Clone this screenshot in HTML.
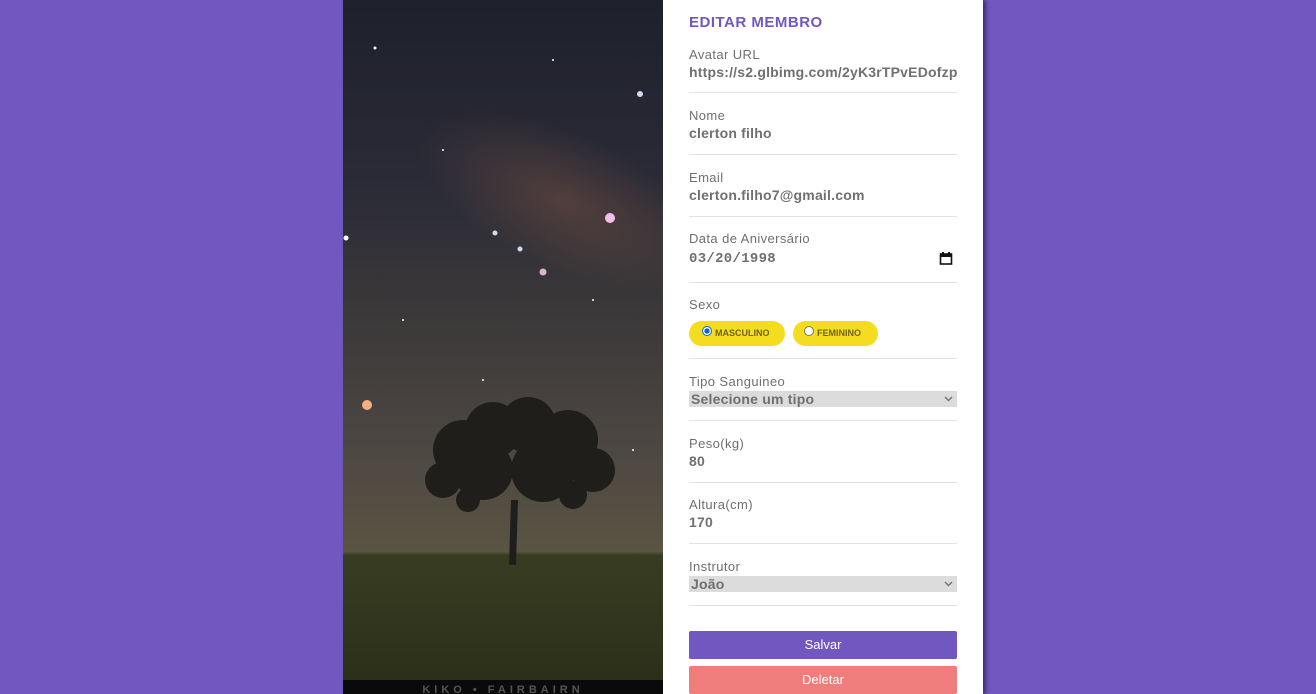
<!DOCTYPE html>
<html><head><meta charset="utf-8"><style>
body{margin:0;width:1316px;height:694px;background:#7157c0;font-family:"Liberation Sans",sans-serif;overflow:hidden;position:relative}
.card{position:absolute;left:343px;top:0;width:640px;height:694px;background:#fff;box-shadow:3px 0 4px rgba(0,0,0,.45)}
.img{position:absolute;left:343px;top:0;width:320px;height:694px;overflow:hidden;
background:linear-gradient(180deg,#1e202c 0%,#292a36 25%,#3b3839 45%,#4a4541 62%,#5a5443 79.5%,#373c22 80%,#2c3019 98%,#0a0a0a 98%)}
.t{position:absolute;left:689px;color:#6e6e6e}
.lab{font-size:13px;letter-spacing:.4px;color:#6f6f6f}
.val{font-size:14px;font-weight:bold;color:#707070;letter-spacing:.2px}
.hr{position:absolute;left:689px;width:268px;height:1px;background:#e3e3e3}
.sel{position:absolute;left:689px;width:268px;height:16px;background:#dcdcdc;font-size:14px;font-weight:bold;color:#6f6f6f;line-height:16px;padding-left:2px;box-sizing:border-box;letter-spacing:.2px}
.sel svg{position:absolute;right:4px;top:5px}
.pill{position:absolute;top:321px;height:25px;border-radius:13px;background:#f4dc1f;font-size:9px;font-weight:bold;color:#6d6420;line-height:25px}
.pill i{display:inline-block;width:8px;height:8px;border-radius:50%;border:1px solid #777;background:#fff;vertical-align:0;margin:0 3px 0 11px}
.btn{position:absolute;left:689px;width:268px;height:28px;border-radius:2px;color:#fff;font-size:13px;text-align:center;line-height:28px}
</style></head><body>
<div class="card"></div>
<div class="img">
<div style="position:absolute;left:60px;top:130px;width:320px;height:140px;background:radial-gradient(ellipse,rgba(150,95,70,.35),transparent 70%);transform:rotate(25deg)"></div>
<svg width="320" height="694" style="position:absolute;left:0;top:0">
<g fill="#fff">
<circle cx="297" cy="94" r="3" fill="#cde"/><circle cx="267" cy="218" r="5" fill="#f0c0e8"/><circle cx="152" cy="233" r="2.5" fill="#cde"/><circle cx="177" cy="249" r="2.5" fill="#cde"/><circle cx="200" cy="272" r="3.5" fill="#e0b0d0"/><circle cx="24" cy="405" r="5" fill="#f6b080"/><circle cx="3" cy="238" r="2.5"/><circle cx="32" cy="48" r="1.5"/><circle cx="100" cy="150" r="1"/><circle cx="250" cy="300" r="1"/><circle cx="60" cy="320" r="1"/><circle cx="210" cy="60" r="1"/><circle cx="140" cy="380" r="1"/><circle cx="290" cy="450" r="1"/>
</g>
<g fill="#1f1e1b">
<path d="M166 565 L168 500 L175 500 L173 565Z"/>
<circle cx="120" cy="450" r="30"/><circle cx="150" cy="430" r="28"/><circle cx="185" cy="425" r="28"/><circle cx="225" cy="440" r="30"/><circle cx="250" cy="470" r="22"/><circle cx="100" cy="480" r="18"/><circle cx="140" cy="470" r="30"/><circle cx="200" cy="470" r="32"/><circle cx="230" cy="495" r="14"/><circle cx="125" cy="500" r="12"/>
</g>
<text x="160" y="693" fill="#555" font-size="11" font-weight="bold" text-anchor="middle" letter-spacing="4" font-family="Liberation Sans">KIKO • FAIRBAIRN</text>
</svg></div>
<div class="t" style="top:14px;font-size:15px;font-weight:bold;color:#7157c0;letter-spacing:.5px">EDITAR MEMBRO</div>
<div class="t lab" style="top:47px">Avatar URL</div><div class="t val" style="top:64px">https://s2.glbimg.com/2yK3rTPvEDofzp</div>
<div class="hr" style="top:92px"></div>
<div class="t lab" style="top:108px">Nome</div><div class="t val" style="top:125px">clerton filho</div>
<div class="hr" style="top:154px"></div>
<div class="t lab" style="top:170px">Email</div><div class="t val" style="top:187px">clerton.filho7@gmail.com</div>
<div class="hr" style="top:216px"></div>
<div class="t lab" style="top:231px">Data de Aniversário</div>
<div class="t" style="top:251px;font-family:'Liberation Mono',monospace;font-weight:bold;font-size:14px;color:#6f6f6f;letter-spacing:.3px">03/20/1998</div>
<svg style="position:absolute;left:939px;top:251px" width="14" height="14"><rect x="1.5" y="3" width="11" height="10" fill="none" stroke="#111" stroke-width="1.6"/><rect x="1.5" y="3" width="11" height="3" fill="#111"/><rect x="3" y="1" width="2" height="3" fill="#111"/><rect x="9" y="1" width="2" height="3" fill="#111"/></svg>
<div class="hr" style="top:282px"></div>
<div class="t lab" style="top:297px">Sexo</div>
<div class="pill" style="left:689px;width:96px"><i style="border-color:#0a62d8;background:radial-gradient(#0a62d8 45%,#fff 50%);margin-left:13px"></i>MASCULINO</div>
<div class="pill" style="left:793px;width:85px"><i></i>FEMININO</div>
<div class="hr" style="top:358px"></div>
<div class="t lab" style="top:374px">Tipo Sanguineo</div>
<div class="sel" style="top:391px">Selecione um tipo<svg width="9" height="6"><path d="M1 1l3.5 3.5L8 1" fill="none" stroke="#777" stroke-width="1.5"/></svg></div>
<div class="hr" style="top:420px"></div>
<div class="t lab" style="top:436px">Peso(kg)</div><div class="t val" style="top:453px">80</div>
<div class="hr" style="top:482px"></div>
<div class="t lab" style="top:497px">Altura(cm)</div><div class="t val" style="top:514px">170</div>
<div class="hr" style="top:543px"></div>
<div class="t lab" style="top:559px">Instrutor</div>
<div class="sel" style="top:576px">João<svg width="9" height="6"><path d="M1 1l3.5 3.5L8 1" fill="none" stroke="#777" stroke-width="1.5"/></svg></div>
<div class="hr" style="top:605px"></div>
<div class="btn" style="top:631px;background:#7157c0">Salvar</div>
<div class="btn" style="top:666px;background:#ef7d7b">Deletar</div>
</body></html>
